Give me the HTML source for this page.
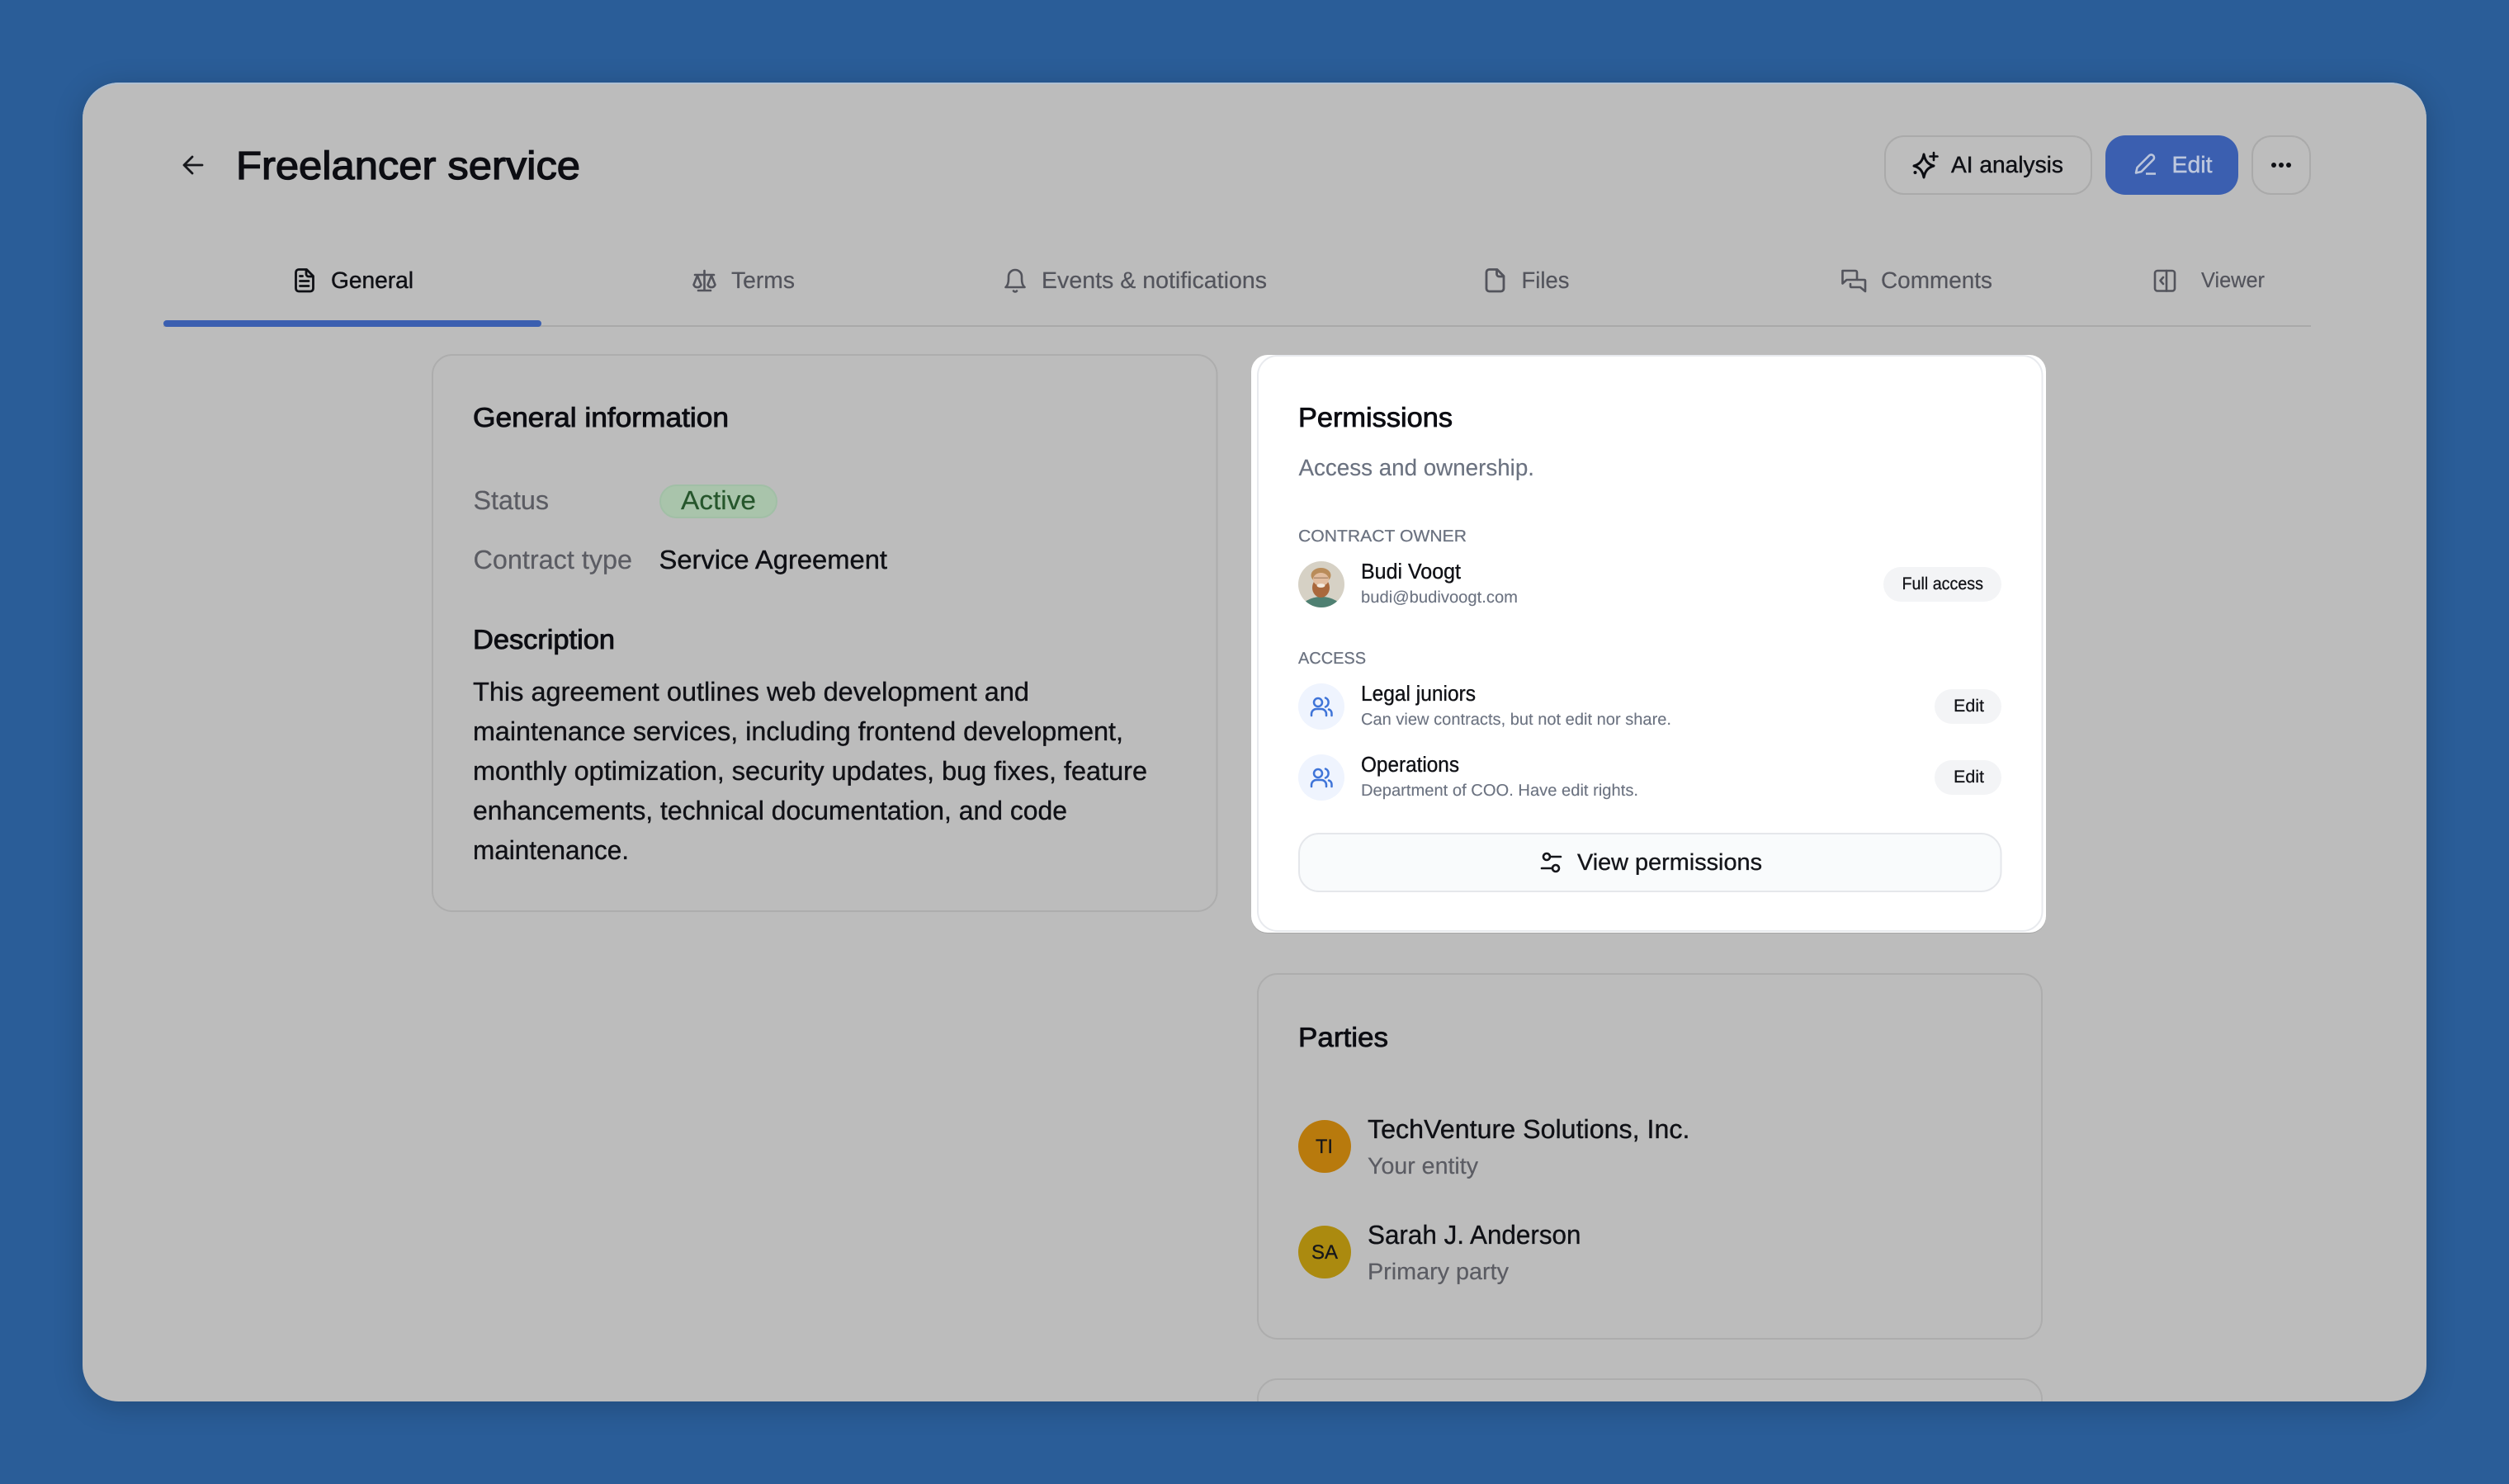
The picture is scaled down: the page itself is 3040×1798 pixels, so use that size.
<!DOCTYPE html>
<html lang="en">
<head>
<meta charset="utf-8">
<title>Freelancer service</title>
<style>
html,body{margin:0;padding:0;width:3040px;height:1798px;overflow:hidden;background:#2a5d98}
#card{position:absolute;left:100px;top:100px;width:2840px;height:1598px;border-radius:44px;background:#bcbcbc;overflow:hidden}
#shadow{position:absolute;left:100px;top:100px;width:2840px;height:1598px;border-radius:44px;box-shadow:0 6px 36px rgba(0,0,0,.2),0 -2px 0 0 transparent}
#hl{position:absolute;left:100px;top:100px;width:2840px;height:44px;border-radius:44px 44px 0 0;box-shadow:inset 0 2px 0 #b0c0d2;pointer-events:none}
svg{position:absolute;left:-100px;top:-100px;display:block}
text{font-family:"Liberation Sans",Arial,sans-serif;text-rendering:geometricPrecision}
</style>
</head>
<body>
<div id="shadow"></div>
<div id="card">
<svg width="3040" height="1798" viewBox="0 0 3040 1798" xmlns="http://www.w3.org/2000/svg">
<defs><clipPath id="av"><circle cx="1601" cy="708" r="28"/></clipPath></defs>

<!-- header -->
<path d="M233 190l-10 10 10 10M223 200h22" fill="none" stroke="#17181c" stroke-width="2.8" stroke-linecap="round" stroke-linejoin="round"/>
<text x="286" y="217" font-size="48" fill="#0c0d12" stroke="#0c0d12" stroke-width="1.3" textLength="417" lengthAdjust="spacingAndGlyphs">Freelancer service</text>

<rect x="2284" y="165" width="250" height="70" rx="23" fill="#bdbdbd" stroke="#aaaaaa" stroke-width="2"/>
<path d="M2331 187c1.500 8 5 12 12 14-7 2-10.500 6-12 14-1.500-8-5-12-12-14 7-2 10.500-6 12-14Z" fill="none" stroke="#0c0d12" stroke-width="3" stroke-linejoin="round"/>
<path d="M2343 185v9M2338.500 189.500h9" stroke="#0c0d12" stroke-width="2.600" stroke-linecap="round"/>
<circle cx="2320.500" cy="209" r="2" fill="#0c0d12"/>
<text x="2364" y="209" font-size="28" fill="#0f1015" stroke="#0f1015" stroke-width=".4" textLength="136" lengthAdjust="spacingAndGlyphs">AI analysis</text>

<rect x="2551" y="164" width="161" height="72" rx="24" fill="#3b5fb0"/>
<path d="M2588 209.500l1.500-6.500 14.500-14.500a3 3 0 0 1 5 5l-14.500 14.500Z" fill="none" stroke="#bcc6dc" stroke-width="2.600" stroke-linejoin="round"/>
<path d="M2600 210.500h12" stroke="#bcc6dc" stroke-width="2.600"/>
<text x="2631.500" y="209" font-size="28" fill="#bec8de" stroke="#bec8de" stroke-width=".4" textLength="49" lengthAdjust="spacingAndGlyphs">Edit</text>

<rect x="2729" y="165" width="70" height="70" rx="23" fill="#bdbdbd" stroke="#aaaaaa" stroke-width="2"/>
<circle cx="2755" cy="200" r="3" fill="#0f1015"/><circle cx="2764" cy="200" r="3" fill="#0f1015"/><circle cx="2773" cy="200" r="3" fill="#0f1015"/>

<!-- tabs -->
<rect x="198" y="394" width="2602" height="2" fill="#a9a9a9"/>
<rect x="198" y="388" width="458" height="8" rx="4" fill="#3b5fb0"/>

<g fill="none" stroke="#0f1015" stroke-width="2.800" stroke-linejoin="round" stroke-linecap="round">
<path d="M362 326.500h9.500l8 8v15a3.500 3.500 0 0 1-3.500 3.500h-14a3.500 3.500 0 0 1-3.500-3.500v-19.500a3.500 3.500 0 0 1 3.500-3.500Z"/>
<path d="M371 327v5a3 3 0 0 0 3 3h5M363.500 334.500h3M363.500 340.500h10.500M363.500 346.500h10.500"/>
</g>
<text x="401" y="349" font-size="28" fill="#101116" stroke="#101116" stroke-width=".45" textLength="100" lengthAdjust="spacingAndGlyphs">General</text>

<g fill="none" stroke="#53545c" stroke-width="2.600" stroke-linejoin="round" stroke-linecap="round">
<path d="M853.500 328v24M846 352h15M842 333h23"/>
<path d="M845 334l-4.500 11a4.800 4.800 0 0 0 9 0ZM862 334l-4.500 11a4.800 4.800 0 0 0 9 0Z"/>
</g>
<text x="886" y="349" font-size="28" fill="#53545c" stroke="#53545c" stroke-width=".2" textLength="77" lengthAdjust="spacingAndGlyphs">Terms</text>

<g fill="none" stroke="#53545c" stroke-width="2.600" stroke-linejoin="round" stroke-linecap="round">
<path d="M1218.500 348c2.500-2 3.500-6 3.500-10v-3a8 8 0 0 1 16 0v3c0 4 1 8 3.500 10Z"/>
<path d="M1228 352.500a2.500 2.500 0 0 0 4 0"/>
</g>
<text x="1262" y="349" font-size="28" fill="#53545c" stroke="#53545c" stroke-width=".2" textLength="273" lengthAdjust="spacingAndGlyphs">Events &amp; notifications</text>

<g fill="none" stroke="#53545c" stroke-width="2.800" stroke-linejoin="round" stroke-linecap="round">
<path d="M1804.500 326.500h9.500l8 8v15a3.500 3.500 0 0 1-3.500 3.500h-14a3.500 3.500 0 0 1-3.500-3.500v-19.500a3.500 3.500 0 0 1 3.500-3.500Z"/>
<path d="M1813.500 327v5a3 3 0 0 0 3 3h5"/>
</g>
<text x="1843.500" y="349" font-size="28" fill="#53545c" stroke="#53545c" stroke-width=".2" textLength="58" lengthAdjust="spacingAndGlyphs">Files</text>

<g fill="none" stroke="#53545c" stroke-width="2.600" stroke-linejoin="round" stroke-linecap="round">
<path d="M2232.500 328h15.500a2 2 0 0 1 2 2v9h-12.500l-5 4.500Z"/>
<path d="M2251 339h8a1 1 0 0 1 1 1v13l-6-5h-11a1 1 0 0 1-1-1v-3"/>
</g>
<text x="2279" y="349" font-size="28" fill="#53545c" stroke="#53545c" stroke-width=".2" textLength="135" lengthAdjust="spacingAndGlyphs">Comments</text>

<g fill="none" stroke="#53545c" stroke-width="2.600" stroke-linejoin="round" stroke-linecap="round">
<rect x="2611" y="328" width="24" height="24.500" rx="3"/>
<path d="M2625 328v24.500M2621 336l-3.500 4 3.500 4"/>
</g>
<text x="2667" y="348" font-size="26" fill="#53545c" stroke="#53545c" stroke-width=".2" textLength="77" lengthAdjust="spacingAndGlyphs">Viewer</text>

<!-- General information card -->
<rect x="524" y="430" width="950.500" height="674" rx="24" fill="none" stroke="#adadad" stroke-width="2"/>
<text x="573" y="517" font-size="33" fill="#0c0d12" stroke="#0c0d12" stroke-width=".9" textLength="310" lengthAdjust="spacingAndGlyphs">General information</text>

<text x="573.500" y="617" font-size="32" fill="#5b5c63" stroke="#5b5c63" stroke-width=".2" textLength="91.500" lengthAdjust="spacingAndGlyphs">Status</text>
<rect x="800" y="588" width="141" height="39" rx="19.500" fill="#a9c4ab" stroke="#a1bfa6" stroke-width="2"/>
<text x="825" y="617" font-size="32" fill="#26562c" stroke="#26562c" stroke-width=".2" textLength="91" lengthAdjust="spacingAndGlyphs">Active</text>

<text x="573.500" y="689" font-size="32" fill="#5b5c63" stroke="#5b5c63" stroke-width=".2" textLength="192.500" lengthAdjust="spacingAndGlyphs">Contract type</text>
<text x="798.500" y="689" font-size="32" fill="#0f1015" stroke="#0f1015" stroke-width=".4" textLength="276.500" lengthAdjust="spacingAndGlyphs">Service Agreement</text>

<text x="573" y="786" font-size="33" fill="#0c0d12" stroke="#0c0d12" stroke-width=".9" textLength="172" lengthAdjust="spacingAndGlyphs">Description</text>

<g font-size="32" fill="#101116">
<text x="573" y="849" font-size="32" fill="#101116" stroke="#101116" stroke-width=".35" textLength="674" lengthAdjust="spacingAndGlyphs">This agreement outlines web development and</text>
<text x="573" y="897" font-size="32" fill="#101116" stroke="#101116" stroke-width=".35" textLength="788" lengthAdjust="spacingAndGlyphs">maintenance services, including frontend development,</text>
<text x="573" y="945" font-size="32" fill="#101116" stroke="#101116" stroke-width=".35" textLength="817" lengthAdjust="spacingAndGlyphs">monthly optimization, security updates, bug fixes, feature</text>
<text x="573" y="993" font-size="32" fill="#101116" stroke="#101116" stroke-width=".35" textLength="720" lengthAdjust="spacingAndGlyphs">enhancements, technical documentation, and code</text>
<text x="573" y="1041" font-size="32" fill="#101116" stroke="#101116" stroke-width=".35" textLength="189" lengthAdjust="spacingAndGlyphs">maintenance.</text>
</g>

<!-- Permissions highlighted card -->
<rect x="1516" y="432" width="963" height="699" rx="20" fill="#a6a6a6"/>
<rect x="1516" y="430" width="963" height="700" rx="20" fill="#ffffff"/>
<rect x="1524" y="431" width="950.500" height="697" rx="24" fill="none" stroke="#e8eaee" stroke-width="2"/>

<text x="1573" y="517" font-size="33" fill="#0c0d12" stroke="#0c0d12" stroke-width=".8" textLength="187" lengthAdjust="spacingAndGlyphs">Permissions</text>
<text x="1573.500" y="576" font-size="28" fill="#6b7280" stroke="#6b7280" stroke-width=".15" textLength="285.500" lengthAdjust="spacingAndGlyphs">Access and ownership.</text>
<text x="1573" y="656" font-size="20" fill="#6b7280" stroke="#6b7280" stroke-width=".25" textLength="204" lengthAdjust="spacingAndGlyphs">CONTRACT OWNER</text>

<g clip-path="url(#av)">
<rect x="1573" y="680" width="56" height="56" fill="#d6d1c5"/>
<ellipse cx="1601" cy="739" rx="25" ry="16" fill="#4f8072"/>
<ellipse cx="1600.500" cy="697" rx="12" ry="9" fill="#b98c5a"/>
<ellipse cx="1600.500" cy="712" rx="10.500" ry="12" fill="#a9683c"/>
<ellipse cx="1600.500" cy="702" rx="9.500" ry="8" fill="#e2bd9f"/>
<ellipse cx="1600.500" cy="709.500" rx="5" ry="2.400" fill="#f4ebe0"/>
<rect x="1592" y="699.500" width="17" height="1.500" fill="#8e6a50" opacity=".6"/>
</g>

<text x="1649" y="701" font-size="26" fill="#0f1015" stroke="#0f1015" stroke-width=".35" textLength="121" lengthAdjust="spacingAndGlyphs">Budi Voogt</text>
<text x="1649" y="730" font-size="20" fill="#6b7280" stroke="#6b7280" stroke-width=".1" textLength="190" lengthAdjust="spacingAndGlyphs">budi@budivoogt.com</text>
<rect x="2282" y="687" width="143" height="42" rx="21" fill="#f3f4f6"/>
<text x="2304.500" y="714" font-size="21" fill="#111217" stroke="#111217" stroke-width=".25" textLength="98.500" lengthAdjust="spacingAndGlyphs">Full access</text>

<text x="1573" y="804" font-size="20" fill="#6b7280" stroke="#6b7280" stroke-width=".25" textLength="82" lengthAdjust="spacingAndGlyphs">ACCESS</text>

<circle cx="1601" cy="856" r="28" fill="#eff4fe"/>
<g fill="none" stroke="#3f74d8" stroke-width="2.500" stroke-linecap="round">
<circle cx="1597" cy="851" r="5"/>
<path d="M1606 845.500a6 6 0 0 1 0 11M1589 867v-2a6 6 0 0 1 6-6h6a6 6 0 0 1 6 6v2M1610 859.500a5 5 0 0 1 3.500 5v2.500"/>
</g>
<text x="1649" y="849" font-size="26" fill="#0f1015" stroke="#0f1015" stroke-width=".35" textLength="139" lengthAdjust="spacingAndGlyphs">Legal juniors</text>
<text x="1649" y="878" font-size="20" fill="#6b7280" stroke="#6b7280" stroke-width=".1" textLength="376" lengthAdjust="spacingAndGlyphs">Can view contracts, but not edit nor share.</text>
<rect x="2344" y="835" width="81" height="42" rx="21" fill="#f3f4f6"/>
<text x="2367" y="862" font-size="21" fill="#111217" stroke="#111217" stroke-width=".25" textLength="37" lengthAdjust="spacingAndGlyphs">Edit</text>

<circle cx="1601" cy="942" r="28" fill="#eff4fe"/>
<g fill="none" stroke="#3f74d8" stroke-width="2.500" stroke-linecap="round">
<circle cx="1597" cy="937" r="5"/>
<path d="M1606 931.500a6 6 0 0 1 0 11M1589 953v-2a6 6 0 0 1 6-6h6a6 6 0 0 1 6 6v2M1610 945.500a5 5 0 0 1 3.500 5v2.500"/>
</g>
<text x="1649" y="935" font-size="26" fill="#0f1015" stroke="#0f1015" stroke-width=".35" textLength="119" lengthAdjust="spacingAndGlyphs">Operations</text>
<text x="1649" y="964" font-size="20" fill="#6b7280" stroke="#6b7280" stroke-width=".1" textLength="336" lengthAdjust="spacingAndGlyphs">Department of COO. Have edit rights.</text>
<rect x="2344" y="921" width="81" height="42" rx="21" fill="#f3f4f6"/>
<text x="2367" y="948" font-size="21" fill="#111217" stroke="#111217" stroke-width=".25" textLength="37" lengthAdjust="spacingAndGlyphs">Edit</text>

<rect x="1574" y="1010" width="850.500" height="70" rx="24" fill="#f9fbfc" stroke="#e5e7eb" stroke-width="2"/>
<g fill="none" stroke="#15161b" stroke-width="2.600" stroke-linecap="round">
<circle cx="1874" cy="1038" r="4"/><circle cx="1885" cy="1052" r="4"/>
<path d="M1878 1038h13M1868 1052h13"/>
</g>
<text x="1911" y="1054" font-size="28" fill="#15161b" stroke="#15161b" stroke-width=".35" textLength="224" lengthAdjust="spacingAndGlyphs">View permissions</text>

<!-- Parties card -->
<rect x="1524" y="1180" width="950" height="442" rx="24" fill="none" stroke="#adadad" stroke-width="2"/>
<text x="1573" y="1268" font-size="33" fill="#0c0d12" stroke="#0c0d12" stroke-width=".8" textLength="109" lengthAdjust="spacingAndGlyphs">Parties</text>

<circle cx="1605" cy="1389" r="32" fill="#b87a0d"/>
<text x="1594" y="1397" font-size="24" fill="#15161b" stroke="#15161b" stroke-width=".3" textLength="21" lengthAdjust="spacingAndGlyphs">TI</text>
<text x="1657" y="1379" font-size="32" fill="#0f1015" stroke="#0f1015" stroke-width=".35" textLength="390.500" lengthAdjust="spacingAndGlyphs">TechVenture Solutions, Inc.</text>
<text x="1657" y="1422" font-size="28" fill="#5b5c63" stroke="#5b5c63" stroke-width=".2" textLength="134" lengthAdjust="spacingAndGlyphs">Your entity</text>

<circle cx="1605" cy="1517" r="32" fill="#ab8a0f"/>
<text x="1589" y="1525" font-size="24" fill="#15161b" stroke="#15161b" stroke-width=".3" textLength="32" lengthAdjust="spacingAndGlyphs">SA</text>
<text x="1657" y="1507" font-size="32" fill="#0f1015" stroke="#0f1015" stroke-width=".35" textLength="258.500" lengthAdjust="spacingAndGlyphs">Sarah J. Anderson</text>
<text x="1657" y="1550" font-size="28" fill="#5b5c63" stroke="#5b5c63" stroke-width=".2" textLength="171" lengthAdjust="spacingAndGlyphs">Primary party</text>

<!-- next card (clipped) -->
<rect x="1524" y="1671" width="950" height="200" rx="24" fill="none" stroke="#adadad" stroke-width="2"/>
</svg>
</div>
<div id="hl"></div>
</body>
</html>
